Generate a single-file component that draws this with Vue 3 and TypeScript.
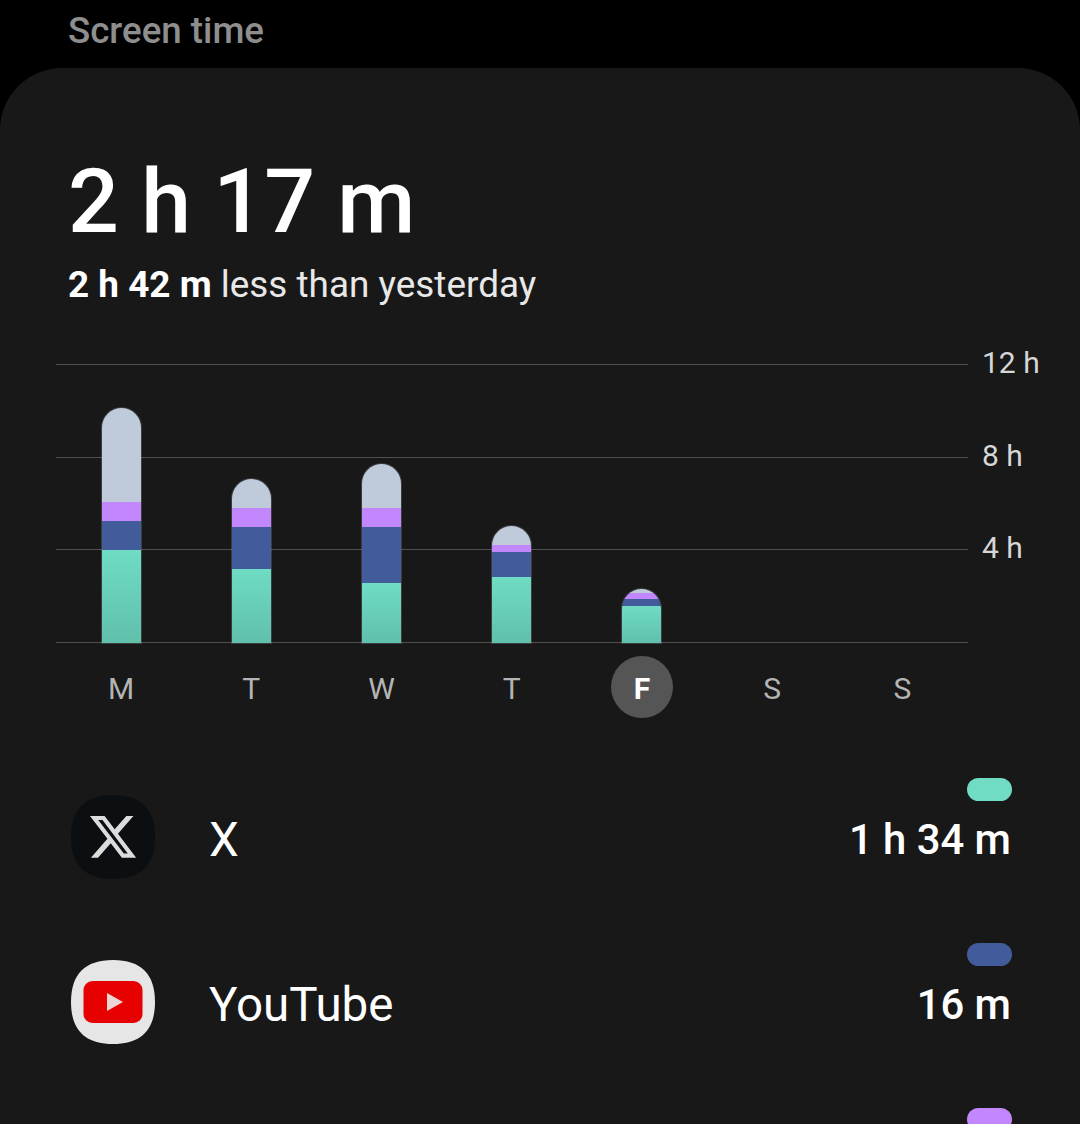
<script setup lang="ts">
interface Day {
  label: string
  today?: boolean
  green: number
  blue: number
  purple: number
  grey: number
}

const days: Day[] = [
  { label: 'M', green: 93, blue: 29, purple: 19, grey: 94 },
  { label: 'T', green: 74, blue: 42, purple: 19, grey: 29 },
  { label: 'W', green: 60, blue: 56, purple: 19, grey: 44 },
  { label: 'T', green: 66, blue: 25, purple: 7, grey: 19 },
  { label: 'F', today: true, green: 37, blue: 7, purple: 6, grey: 4 },
  { label: 'S', green: 0, blue: 0, purple: 0, grey: 0 },
  { label: 'S', green: 0, blue: 0, purple: 0, grey: 0 },
]

const gridRows = ['12 h', '8 h', '4 h', '']

const hasUsage = (d: Day) => d.green + d.blue + d.purple + d.grey > 0
</script>

<template>
  <div class="screen">
    <div class="title">Screen time</div>
    <main class="card">
      <h1 class="total">2 h 17 m</h1>
      <p class="compare"><b>2 h 42 m</b> less than yesterday</p>

      <section class="chart">
        <div class="grid">
          <div v-for="(row, i) in gridRows" :key="i" class="grid-row">
            <span class="grid-line" />
            <span class="grid-label">{{ row }}</span>
          </div>
        </div>
        <div class="bars">
          <div v-for="(d, i) in days" :key="i" class="bar-slot">
            <div v-if="hasUsage(d)" class="bar">
              <div class="seg grey" :style="{ height: d.grey + 'px' }" />
              <div class="seg purple" :style="{ height: d.purple + 'px' }" />
              <div class="seg blue" :style="{ height: d.blue + 'px' }" />
              <div class="seg green" :style="{ height: d.green + 'px' }" />
            </div>
          </div>
        </div>
      </section>

      <div class="days">
        <div v-for="(d, i) in days" :key="i" class="day">
          <span class="day-label" :class="{ today: d.today }">{{ d.label }}</span>
        </div>
      </div>

      <ul class="apps">
        <li class="app">
          <svg class="app-icon" viewBox="0 0 84 84">
            <path fill="#0b0f12" d="M42 0C70 0 84 14 84 42S70 84 42 84 0 70 0 42 14 0 42 0Z" />
            <path
              fill="#dcdcdc"
              transform="translate(16.3 16.2) scale(2.14)"
              d="M18.244 2.25h3.308l-7.227 8.26 8.502 11.24H16.17l-5.214-6.817L4.99 21.75H1.68l7.73-8.835L1.254 2.25H8.08l4.713 6.231zm-1.161 17.52h1.833L7.084 4.126H5.117z"
            />
          </svg>
          <span class="app-name">X</span>
          <div class="app-usage">
            <span class="pill green-pill" />
            <span class="app-time">1 h 34 m</span>
          </div>
        </li>
        <li class="app">
          <svg class="app-icon" viewBox="0 0 84 84">
            <path fill="#e6e6e6" d="M42 0C70 0 84 14 84 42S70 84 42 84 0 70 0 42 14 0 42 0Z" />
            <rect x="12.5" y="21" width="59" height="42" rx="9" fill="#e60000" />
            <path fill="#ebd5d5" d="M36 33l16 9-16 9Z" />
          </svg>
          <span class="app-name">YouTube</span>
          <div class="app-usage">
            <span class="pill blue-pill" />
            <span class="app-time">16 m</span>
          </div>
        </li>
        <li class="app">
          <span class="app-icon" />
          <span class="app-name" />
          <div class="app-usage">
            <span class="pill purple-pill" />
          </div>
        </li>
      </ul>
    </main>
  </div>
</template>

<style>
html,
body {
  margin: 0;
  background: #000;
  overflow: hidden;
}
</style>

<style scoped>
.screen {
  width: 1080px;
  height: 1124px;
  overflow: hidden;
  background: #000;
  font-family: Roboto, sans-serif;
  color: #fff;
}

.title {
  height: 68px;
  padding: 11px 0 0 68px;
  box-sizing: border-box;
  font-size: 36.7px;
  line-height: 40px;
  font-weight: 500;
  color: #8e8e8e;
}

.card {
  height: 1056px;
  box-sizing: border-box;
  padding: 82px 0 0 56px;
  background: #181818;
  border-radius: 62px 62px 0 0;
}

.total {
  margin: 0 0 0 12px;
  font-size: 89.6px;
  line-height: 104px;
  font-weight: 500;
}

.compare {
  margin: 9px 0 0 12px;
  font-size: 36.9px;
  line-height: 44px;
  color: #e8e8e8;
}

.compare b {
  font-weight: 700;
  color: #fff;
}

.chart {
  position: relative;
  margin-top: 57px;
  height: 279px;
}

.grid-row {
  display: flex;
  align-items: center;
  height: 1px;
  margin-bottom: 91.67px;
}

.grid-line {
  width: 912px;
  height: 1px;
  background: #505050;
}

.grid-label {
  margin: 0 0 3px 14px;
  font-size: 30px;
  line-height: 36px;
  color: #d6d6d6;
  white-space: nowrap;
}

.bars {
  position: absolute;
  left: 0;
  bottom: 0;
  width: 911.5px;
  height: 279px;
  display: grid;
  grid-template-columns: repeat(7, 1fr);
}

.bar-slot {
  display: flex;
  justify-content: center;
  align-items: flex-end;
}

.bar {
  width: 39px;
  border-radius: 19.5px 19.5px 0 0;
  overflow: hidden;
  box-shadow: 0 0 0 1px rgba(150, 150, 150, 0.3);
}

.seg.grey {
  background: #bfcadb;
}

.seg.purple {
  background: #c387fd;
}

.seg.blue {
  background: #425c9b;
}

.seg.green {
  background: linear-gradient(#6fdcc3, #60c0ab);
}

.days {
  display: grid;
  grid-template-columns: repeat(7, 1fr);
  width: 911.5px;
  margin-top: 13px;
}

.day {
  display: flex;
  justify-content: center;
}

.day-label {
  width: 62px;
  height: 62px;
  box-sizing: border-box;
  padding-top: 2px;
  display: flex;
  align-items: center;
  justify-content: center;
  border-radius: 50%;
  font-size: 30px;
  color: #b4b4b4;
}

.day-label.today {
  background: #555;
  color: #fff;
  font-weight: 700;
}

.apps {
  list-style: none;
  margin: 60px 0 0;
  padding: 0 68px 0 15px;
}

.app {
  display: flex;
  align-items: center;
  height: 118px;
  margin-bottom: 47px;
}

.app-icon {
  width: 84px;
  height: 84px;
  flex: none;
}

.app-name {
  margin: 6px 0 0 54px;
  font-size: 47.5px;
  line-height: 54px;
}

.app-usage {
  margin-left: auto;
  display: flex;
  flex-direction: column;
  align-items: flex-end;
  align-self: flex-start;
}

.pill {
  width: 45px;
  height: 23px;
  border-radius: 12px;
}

.green-pill {
  background: #6fdcc3;
}

.blue-pill {
  background: #425c9b;
}

.purple-pill {
  background: #c387fd;
}

.app-time {
  margin: 15px 1px 0 0;
  font-size: 41.8px;
  line-height: 48px;
  font-weight: 500;
}
</style>
